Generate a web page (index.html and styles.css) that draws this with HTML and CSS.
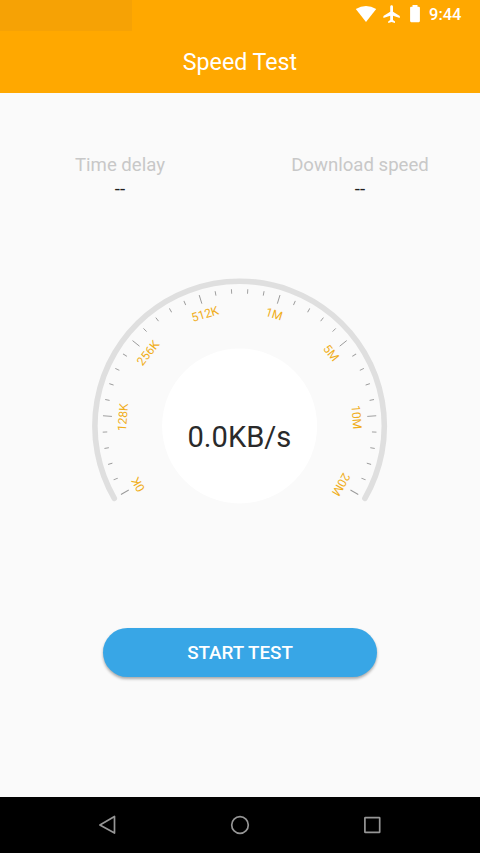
FILE: index.html
```html
<!DOCTYPE html>
<html lang="en">
<head>
<meta charset="utf-8">
<title>Speed Test</title>
<link rel="stylesheet" href="styles.css">
</head>
<body>
<div class="screen">
  <header class="header">
    <div class="status">
      <span class="status-shade"></span>
      <svg class="status-icons" width="66" height="22" viewBox="0 0 66 22">
        <path d="M.8 6.100Q11-.3 21.200 6.100L11 19Z"/>
        <path d="M36.600 2.300c-.9 0-1.400.7-1.400 1.500v5L28.400 13v1.900l6.800-2.100v4.300l-2 1.500v1.400l3.400-1 3.400 1v-1.400l-2-1.500v-4.300l6.800 2.100V13L38 8.800v-5c0-.8-.5-1.500-1.400-1.500Z"/>
        <path d="M57.500 2h5v1.700h1.300q1.100 0 1.100 1.100v13.300q0 1.100-1.100 1.100h-7.600q-1.100 0-1.100-1.100V4.800q0-1.100 1.100-1.100h1.300Z"/>
      </svg>
      <span class="clock">9:44</span>
    </div>
    <h1 class="title">Speed Test</h1>
  </header>

  <main class="content">
    <section class="stats">
      <div class="stat">
        <div class="stat-label">Time delay</div>
        <div class="stat-value">--</div>
      </div>
      <div class="stat">
        <div class="stat-label">Download speed</div>
        <div class="stat-value">--</div>
      </div>
    </section>

    <svg class="gauge" width="300" height="240" viewBox="-149.6 -150 300 240">
      <path class="gauge-arc" d="M-125.3 72.300A144.700 144.700 0 1 1 125.300 72.300"/>
      <g id="ticks" class="gauge-ticks"></g>
      <g id="labels" class="gauge-labels"></g>
      <circle class="gauge-hub" r="77.500"/>
      <text class="gauge-value" x="-0.2" y="20.800">0.0KB/s</text>
    </svg>

    <button class="start">START TEST</button>
  </main>

  <nav class="navbar">
    <svg width="24" height="24" viewBox="0 0 24 24"><path d="M18.500 3.500v16.600L3.900 12Z"/></svg>
    <svg width="24" height="24" viewBox="0 0 24 24"><circle cx="12" cy="12" r="8.300"/></svg>
    <svg width="24" height="24" viewBox="0 0 24 24"><rect x="4.900" y="4.600" width="14.800" height="14.800" rx=".5"/></svg>
  </nav>
</div>
<script src="gauge.js"></script>
</body>
</html>
```

FILE: styles.css
```css
* {
  box-sizing: border-box;
}

body {
  margin: 0;
  font-family: Roboto, "Liberation Sans", sans-serif;
}

.screen {
  display: flex;
  flex-direction: column;
  width: 480px;
  height: 853px;
  background: #fafafa;
  overflow: hidden;
}

.header {
  height: 93px;
  background: #ffa800;
  color: #fff;
}

.status {
  display: flex;
  align-items: flex-start;
  height: 31px;
  padding-right: 18px;
}

.status-shade {
  width: 132px;
  height: 31px;
  margin-right: auto;
  background: #f6a205;
}

.status-icons {
  margin: 3px 8px 0 0;
  fill: #fff;
}

.clock {
  width: 33px;
  margin-top: 5px;
  font-size: 16.5px;
  font-weight: 500;
  line-height: 20px;
  white-space: nowrap;
}

.title {
  margin: 16px 0 0;
  font-size: 23.2px;
  font-weight: 400;
  line-height: 30px;
  text-align: center;
}

.content {
  display: flex;
  flex: 1;
  flex-direction: column;
  align-items: center;
}

.stats {
  display: grid;
  grid-template-columns: 1fr 1fr;
  width: 100%;
  height: 110px;
  margin-top: 60px;
  text-align: center;
}

.stat-label {
  color: #c8c8c8;
  font-size: 18.6px;
  line-height: 24px;
}

.stat-value {
  color: #222;
  font-size: 18.6px;
  line-height: 24px;
}

.gauge {
  margin-top: 13px;
}

.gauge-arc {
  fill: none;
  stroke: #dfdfdf;
  stroke-width: 5.6;
  stroke-linecap: round;
}

.gauge-ticks {
  stroke: #999;
  stroke-width: 0.9;
}

.gauge-labels {
  fill: #f0ae1c;
  font-size: 12px;
  text-anchor: middle;
}

.gauge-hub {
  fill: #fff;
}

.gauge-value {
  fill: #2a2a2a;
  font-size: 29.1px;
  text-anchor: middle;
}

.start {
  width: 274px;
  height: 49px;
  margin-top: 112px;
  padding: 1px 0 0;
  border: 0;
  border-radius: 25px;
  background: #38a6e6;
  box-shadow: 0 2px 3px rgba(0, 0, 0, 0.32);
  color: #fff;
  font: 500 18.8px/48px Roboto, "Liberation Sans", sans-serif;
}

.navbar {
  display: flex;
  align-items: center;
  justify-content: space-between;
  height: 56px;
  padding: 0 96px;
  background: #000;
}

.navbar svg {
  fill: none;
  stroke: #969696;
  stroke-width: 1.7;
  stroke-linejoin: round;
}
```

FILE: gauge.js
```js
const NS = "http://www.w3.org/2000/svg";
const marks = ["0K", "128K", "256K", "512K", "1M", "5M", "10M", "20M"];
const steps = (marks.length - 1) * 5;

for (let i = 0; i <= steps; i++) {
  const angle = -120 + (240 * i) / steps;
  const major = i % 5 === 0;
  const tick = document.createElementNS(NS, "line");
  tick.setAttribute("y1", -137);
  tick.setAttribute("y2", major ? -128 : -132.5);
  tick.setAttribute("transform", `rotate(${angle})`);
  document.getElementById("ticks").append(tick);

  if (major) {
    const label = document.createElementNS(NS, "text");
    label.setAttribute("y", -113);
    label.setAttribute("transform", `rotate(${angle})`);
    label.textContent = marks[i / 5];
    document.getElementById("labels").append(label);
  }
}
```
